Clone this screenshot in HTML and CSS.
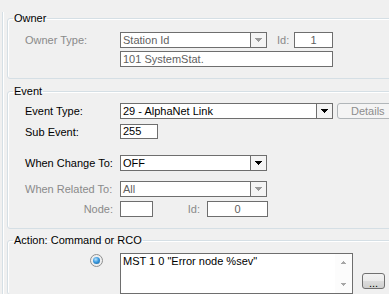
FILE: index.html
```html
<!DOCTYPE html>
<html lang="en">
<head>
    <meta charset="UTF-8">
    <meta name="viewport" content="width=device-width, initial-scale=1.0">
    <title>Event Action</title>
    <link rel="stylesheet" href="styles.css">
</head>
<body>
    <div class="panel">
        <fieldset class="group">
            <legend>Owner</legend>
            <div class="row row-owner-type">
                <span class="label disabled">Owner Type:</span>
                <div class="combo combo-short is-disabled">
                    <span class="combo-text">Station Id</span>
                    <span class="combo-btn">
                        <svg width="7" height="5" viewBox="0 0 7 5"><path d="M0 0h7v1H0zM1 1h5v1H1zM2 2h3v1H2zM3 3h1v1H3z" fill="#9a9a9a"/></svg>
                    </span>
                </div>
                <span class="id-label disabled">Id:</span>
                <div class="field field-id is-disabled">1</div>
            </div>
            <div class="row row-owner-name">
                <span class="label"></span>
                <div class="field field-long is-disabled">101 SystemStat.</div>
            </div>
        </fieldset>

        <fieldset class="group group-event">
            <legend>Event</legend>
            <div class="row row-event-type">
                <span class="label">Event Type:</span>
                <div class="combo combo-long">
                    <span class="combo-text">29 - AlphaNet Link</span>
                    <span class="combo-btn">
                        <svg width="7" height="5" viewBox="0 0 7 5"><path d="M0 0h7v1H0zM1 1h5v1H1zM2 2h3v1H2zM3 3h1v1H3z" fill="#000"/></svg>
                    </span>
                </div>
                <button class="btn btn-details" disabled>Details</button>
            </div>
            <div class="row row-sub-event">
                <span class="label">Sub Event:</span>
                <div class="field field-sub">255</div>
            </div>
            <div class="row row-change">
                <span class="label">When Change To:</span>
                <div class="combo combo-short">
                    <span class="combo-text">OFF</span>
                    <span class="combo-btn">
                        <svg width="7" height="5" viewBox="0 0 7 5"><path d="M0 0h7v1H0zM1 1h5v1H1zM2 2h3v1H2zM3 3h1v1H3z" fill="#000"/></svg>
                    </span>
                </div>
            </div>
            <div class="row row-related">
                <span class="label disabled">When Related To:</span>
                <div class="combo combo-short is-disabled">
                    <span class="combo-text">All</span>
                    <span class="combo-btn">
                        <svg width="7" height="5" viewBox="0 0 7 5"><path d="M0 0h7v1H0zM1 1h5v1H1zM2 2h3v1H2zM3 3h1v1H3z" fill="#9a9a9a"/></svg>
                    </span>
                </div>
            </div>
            <div class="row row-node">
                <span class="label label-right disabled">Node:</span>
                <div class="field field-node is-disabled"></div>
                <span class="node-id-label disabled">Id:</span>
                <div class="field field-node-id is-disabled">0</div>
            </div>
        </fieldset>

        <fieldset class="group group-action">
            <legend>Action: Command or RCO</legend>
            <div class="row row-action">
                <span class="radio-cell"><span class="radio"></span></span>
                <div class="memo">
                    <div class="memo-text">MST 1 0 "Error node %sev"</div>
                    <div class="scrollbar">
                        <span class="scroll-btn">
                            <svg width="5" height="3" viewBox="0 0 5 3"><path d="M2 0h1v1H2zM1 1h3v1H1zM0 2h5v1H0z" fill="#a7a7a7"/></svg>
                        </span>
                        <span class="scroll-btn">
                            <svg width="5" height="3" viewBox="0 0 5 3"><path d="M0 0h5v1H0zM1 1h3v1H1zM2 2h1v1H2z" fill="#a7a7a7"/></svg>
                        </span>
                    </div>
                </div>
                <button class="btn btn-more">...</button>
            </div>
        </fieldset>
    </div>
</body>
</html>
```

FILE: styles.css
```css
* {
    box-sizing: border-box;
}

body {
    margin: 0;
    width: 389px;
    height: 294px;
    overflow: hidden;
    background: #f0f0f0;
    font-family: 'Liberation Sans', Arial, sans-serif;
    font-size: 11px;
    color: #000;
}

.panel {
    margin: 12px 0 0 2px;
    padding-left: 4px;
    border-left: 1px solid #d5dfe5;
    box-shadow: inset 1px 0 0 #fff;
    height: 282px;
    overflow: hidden;
}

.group {
    width: 400px;
    min-width: 0;
    margin: 0;
    padding: 0 0 11px 17px;
    border: 1px solid #d5dfe5;
    border-radius: 3px;
    box-shadow: inset 1px 1px 0 #fff;
}

.group legend {
    margin-left: -12px;
    padding: 0 1px;
    line-height: 13px;
}

.group-event {
    margin-top: 6px;
}

.group-action {
    margin-top: 5px;
    padding-bottom: 0;
}

.row {
    display: flex;
    align-items: center;
    height: 16px;
}

.row-owner-type { margin-top: 7px; }
.row-owner-name { margin-top: 3px; }
.row-event-type { margin-top: 5px; }
.row-sub-event { margin-top: 5px; height: 15px; }
.row-change { margin-top: 16px; }
.row-related { margin-top: 10px; }
.row-node { margin-top: 4px; }

.row-action {
    margin-top: 6px;
    height: auto;
    align-items: flex-start;
}

.label {
    width: 95px;
    flex: none;
    white-space: nowrap;
}

.label-right {
    text-align: right;
    padding-right: 7px;
}

.disabled {
    color: #8a8a8a;
}

.combo,
.field {
    height: 16px;
    border: 1px solid #6e6e6e;
    background: #fff;
    line-height: 14px;
    white-space: nowrap;
    overflow: hidden;
}

.combo {
    display: flex;
}

.combo-short { width: 147px; }
.combo-long { width: 213px; }

.combo-text {
    flex: 1;
    padding-left: 2px;
}

.combo-btn {
    width: 16px;
    border-left: 1px solid #6e6e6e;
    background: #f4f4f4;
    display: flex;
    align-items: center;
    justify-content: center;
}

.is-disabled {
    color: #5f5f5f;
}

.field {
    padding-left: 2px;
}

.field-id {
    width: 39px;
    text-align: center;
    padding: 0;
}

.field-long { width: 213px; }

.field-sub {
    width: 38px;
    height: 15px;
    line-height: 13px;
}

.field-node { width: 33px; }

.field-node-id {
    width: 61px;
    text-align: center;
    padding: 0;
}

.id-label {
    margin-left: 10px;
    width: 17px;
}

.node-id-label {
    width: 54px;
    text-align: right;
    padding-right: 7px;
}

.btn {
    font-family: inherit;
    font-size: 11px;
    padding: 0;
    border-radius: 3px;
}

.btn-details {
    margin-left: 4px;
    width: 60px;
    height: 16px;
    border: 1px solid #b1b6b9;
    background: #f4f4f4;
    color: #8d8d8d;
    text-align: left;
    padding-left: 13px;
}

.radio-cell {
    width: 95px;
    flex: none;
    padding: 1px 0 0 65px;
}

.radio {
    display: flex;
    align-items: center;
    justify-content: center;
    width: 13px;
    height: 13px;
    border-radius: 50%;
    border: 1px solid #8e8f8f;
    background: radial-gradient(circle at 50% 50%, #e6e6e6, #f4f4f4);
}

.radio::after {
    content: "";
    width: 7px;
    height: 7px;
    border-radius: 50%;
    background: radial-gradient(circle at 40% 35%, #b9e3fb 0, #3a9ae0 45%, #1a5d92 100%);
}

.memo {
    width: 233px;
    height: 41px;
    border: 1px solid #6e6e6e;
    background: #fff;
    display: flex;
}

.memo-text {
    flex: 1;
    padding: 1px 2px;
    line-height: 13px;
    white-space: nowrap;
}

.scrollbar {
    width: 17px;
    display: flex;
    flex-direction: column;
    justify-content: space-between;
    background: #fcfcfc;
}

.scroll-btn {
    height: 17px;
    display: flex;
    align-items: center;
    justify-content: center;
}

.btn-more {
    margin: 20px 0 0 9px;
    width: 23px;
    height: 16px;
    border: 1px solid #707070;
    background: linear-gradient(#f2f2f2, #ebebeb 50%, #dddddd 50%, #cfcfcf);
    color: #000;
    line-height: 10px;
    padding-top: 4px;
}
```
